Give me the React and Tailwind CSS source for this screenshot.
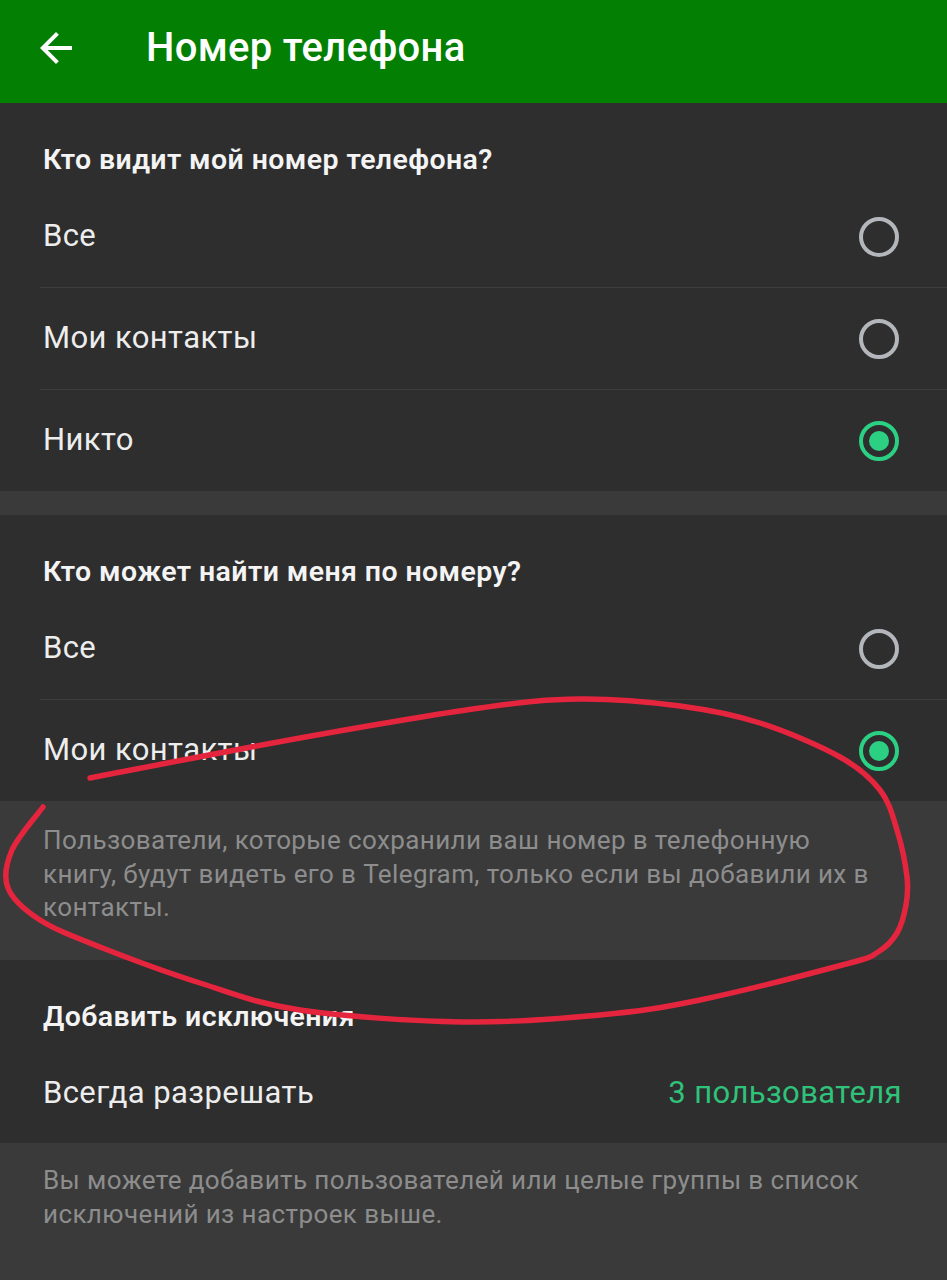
import React from "react";

const font = { fontFamily: "Roboto, 'Noto Sans', sans-serif" };

// hand-drawn red loop over the screen (annotation)
const loop = [
  [90, 778], [300, 738], [480, 708], [580, 699], [680, 706], [760, 723], [840, 757],
  [880, 790], [897, 830], [907, 877], [906, 905], [897, 933], [878, 952], [846, 964],
  [700, 1000], [600, 1015], [462, 1022], [300, 1010], [200, 983], [100, 947], [40, 920],
  [8, 888], [12, 850], [43, 807],
];

function smoothPath(pts) {
  let d = `M${pts[0][0]} ${pts[0][1]}`;
  for (let i = 0; i < pts.length - 1; i++) {
    const p0 = pts[i - 1] || pts[i];
    const p1 = pts[i];
    const p2 = pts[i + 1];
    const p3 = pts[i + 2] || p2;
    const c1 = [p1[0] + (p2[0] - p0[0]) / 6, p1[1] + (p2[1] - p0[1]) / 6];
    const c2 = [p2[0] - (p3[0] - p1[0]) / 6, p2[1] - (p3[1] - p1[1]) / 6];
    d += ` C${c1[0]} ${c1[1]} ${c2[0]} ${c2[1]} ${p2[0]} ${p2[1]}`;
  }
  return d;
}

function Radio({ checked }) {
  if (checked) {
    return (
      <div className="w-10 h-10 rounded-full border-4 border-[#2bd083] flex items-center justify-center">
        <div className="w-5 h-5 rounded-full bg-[#2bd083]" />
      </div>
    );
  }
  return <div className="w-10 h-10 rounded-full border-4 border-[#b3b6ba]" />;
}

function SectionTitle({ children }) {
  return (
    <div className="h-[83px] pl-[43px] pt-[40px]">
      <div className="text-[28.5px] leading-[34px] tracking-[0.4px] font-semibold text-[#f4f4f4]">{children}</div>
    </div>
  );
}

function Option({ label, checked, divider }) {
  return (
    <>
      <div className="h-[101px] flex items-center justify-between pl-[43px] pr-[48px]">
        <span className="text-[31px] tracking-[0.4px] text-[#ededed]">{label}</span>
        <Radio checked={checked} />
      </div>
      {divider && <div className="ml-[40px] h-px bg-[#3d3d3d]" />}
    </>
  );
}

function Info({ children, className }) {
  return (
    <div className={`bg-[#3a3a3a] pl-[43px] pr-[16px] text-[26px] tracking-[0.4px] leading-[33.5px] text-[#8d8d8d] ${className}`}>
      {children}
    </div>
  );
}

export default function App() {
  return (
    <div className="relative w-[947px] h-[1280px] overflow-hidden bg-[#2e2e2e] flex flex-col" style={font}>
      <div className="h-[103px] bg-[#037f03] flex items-center shrink-0">
        <svg width="48" height="48" viewBox="0 0 24 24" className="ml-[32px] mb-[8px]" fill="#ffffff">
          <path d="M20 11H7.83l5.59-5.59L12 4l-8 8 8 8 1.41-1.41L7.83 13H20v-2z" />
        </svg>
        <span className="ml-[66px] mb-[8px] text-[40px] tracking-[0.3px] font-medium text-white">Номер телефона</span>
      </div>

      <div>
        <SectionTitle>Кто видит мой номер телефона?</SectionTitle>
        <Option label="Все" divider />
        <Option label="Мои контакты" divider />
        <Option label="Никто" checked />
      </div>

      <div className="h-[24px] bg-[#3a3a3a] shrink-0" />

      <div>
        <SectionTitle>Кто может найти меня по номеру?</SectionTitle>
        <Option label="Все" divider />
        <Option label="Мои контакты" checked />
      </div>

      <Info className="h-[159px] shrink-0 pt-[23px]">
        Пользователи, которые сохранили ваш номер в телефонную
        <br />
        книгу, будут видеть его в Telegram, только если вы добавили их в
        <br />
        контакты.
      </Info>

      <div>
        <SectionTitle>Добавить исключения</SectionTitle>
        <div className="h-[100px] flex items-center justify-between pl-[43px] pr-[45px]">
          <span className="text-[31px] tracking-[0.4px] text-[#ededed]">Всегда разрешать</span>
          <span className="text-[31px] tracking-[0.4px] text-[#2fc27a]">3 пользователя</span>
        </div>
      </div>

      <Info className="flex-1 pt-[21px]">
        Вы можете добавить пользователей или целые группы в список
        <br />
        исключений из настроек выше.
      </Info>

      <svg className="absolute inset-0 pointer-events-none" width="947" height="1280" viewBox="0 0 947 1280">
        <path d={smoothPath(loop)} fill="none" stroke="#e5253d" strokeWidth="5.5" strokeLinecap="round" strokeLinejoin="round" />
      </svg>
    </div>
  );
}
